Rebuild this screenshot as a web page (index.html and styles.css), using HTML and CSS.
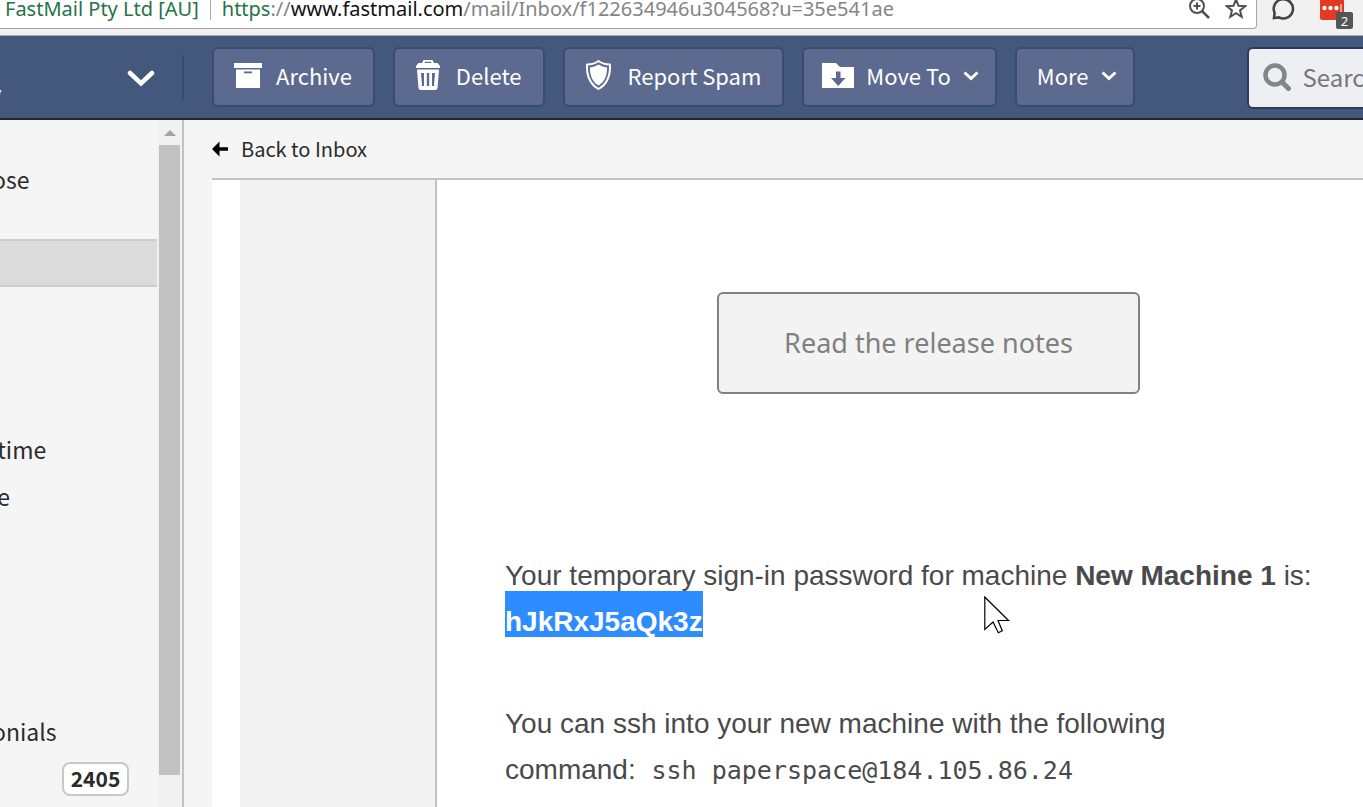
FILE: index.html
```html
<!DOCTYPE html>
<html lang="en">
<head>
<meta charset="utf-8">
<title>FastMail</title>
<link rel="stylesheet" href="styles.css">
</head>
<body>
<div class="app">
  <div class="browser">
    <div class="address">
      <span class="issuer">FastMail Pty Ltd [AU]</span>
      <span class="url"><span class="secure">https</span>://<span class="host">www.fastmail.com</span>/mail/Inbox/f122634946u304568?u=35e541ae</span>
      <svg class="tool" width="22" height="22" viewBox="0 0 22 22" fill="none" stroke="#505050" stroke-width="2"><circle cx="9" cy="9" r="7"/><path d="M5.500 9h7M9 5.500v7"/><path d="M14 14l7 7" stroke-width="2.500"/></svg>
      <svg class="tool" width="22" height="22" viewBox="0 0 22 22" fill="none" stroke="#505050" stroke-width="2"><path d="M11 2.500l2.500 6.300 6.600.4-5.100 4.200 1.700 6.400-5.700-3.600-5.700 3.600L7 13.400 1.900 9.200l6.600-.4z"/></svg>
    </div>
    <svg class="bubble" width="24" height="24" viewBox="0 0 24 24" fill="none" stroke="#444" stroke-width="2.600"><path d="M3 21l.6-5.200A9.600 9.600 0 1 1 8 20.400z"/></svg>
    <div class="extension">
      <svg width="24" height="24" viewBox="0 0 24 24"><rect width="24" height="24" rx="2" fill="#e23a22"/><g fill="#fff"><circle cx="4.500" cy="12" r="2.200"/><circle cx="10.500" cy="12" r="2.200"/><circle cx="16.500" cy="12" r="2.200"/><path d="M20.500 8h1v8h-1z"/></g></svg>
      <span class="count">2</span>
    </div>
  </div>

  <header class="toolbar">
    <div class="account">
      <span class="account-name">y</span>
      <button class="account-menu" aria-label="Account menu"><svg width="28" height="18" viewBox="0 0 28 18" fill="none" stroke="#fff" stroke-width="4.500" stroke-linecap="round"><path d="M3 4l11 10.500L25 4"/></svg></button>
    </div>
    <div class="actions">
      <button class="btn"><svg width="28" height="26" viewBox="0 0 28 26"><path fill="#fff" d="M0 1h28v5H0zM2 7.500h24V26H2z"/><path fill="#5b6a8e" d="M10 9.500h8v1.800h-8z"/></svg>Archive</button>
      <button class="btn"><svg class="tall" width="27" height="32" viewBox="-1 0 27 32"><path fill="#fff" fill-rule="evenodd" d="M6 4l1.500-3h9L18 4h3.500L24 7v2H0V7l2.500-3zM8.500 4h7l-.7-1.200H9.200zM1 10.500h22L21.500 29q-.3 2-2 2h-15q-1.700 0-2-2zM5 14l1 13h2V14zM10.800 14v13h2.400V14zM16 14v13h2l1-13z"/></svg>Delete</button>
      <button class="btn"><svg class="tall" width="29" height="32" viewBox="-1 -1 29 32"><path fill="none" stroke="#fff" stroke-width="2" stroke-linejoin="round" d="M12.500 1Q17 4.500 24 4.500C24.500 16 21.500 24 12.500 29 3.500 24 .5 16 1 4.500Q8 4.500 12.500 1z"/><path fill="#fff" d="M12.500 4.500q4 2.400 8.600 3C21 16 18.500 22 12.500 25.500 6.500 22 4 16 3.900 7.500q4.600-.6 8.600-3z"/></svg>Report Spam</button>
      <button class="btn btn-menu"><svg class="folder" width="32" height="26" viewBox="0 0 32 26"><path fill="#fff" d="M0 1h14l4 4h14v21H0z"/><path fill="#5b6a8e" d="M14 9.500h4.500V16h5L16.200 24 9 16h5z"/></svg>Move To<svg class="caret" width="16" height="10" viewBox="0 0 16 10" fill="none" stroke="#fff" stroke-width="3"><path d="M1.500 1.500L8 7.500l6.500-6"/></svg></button>
      <button class="btn btn-menu">More<svg class="caret" width="16" height="10" viewBox="0 0 16 10" fill="none" stroke="#fff" stroke-width="3"><path d="M1.500 1.500L8 7.500l6.500-6"/></svg></button>
    </div>
    <label class="search">
      <svg width="28" height="28" viewBox="0 0 28 28" fill="none" stroke="#858585"><circle cx="12" cy="12" r="9.500" stroke-width="4.500"/><path d="M19 19l6.500 6.500" stroke-width="5" stroke-linecap="round"/></svg>
      <input type="text" placeholder="Search" aria-label="Search mail">
    </label>
  </header>

  <div class="body">
    <nav class="sidebar">
      <div class="folders">
        <a class="compose" href="#">ose</a>
        <a class="row current" href="#" aria-label="Inbox"></a>
        <div class="row"></div>
        <div class="row"></div>
        <div class="row"></div>
        <a class="row" href="#"> time</a>
        <a class="row" href="#"> e</a>
        <div class="row"></div>
        <div class="row"></div>
        <div class="row"></div>
        <div class="row"></div>
        <a class="row" href="#">onials</a>
        <a class="row" href="#"><span class="badge">2405</span></a>
      </div>
      <div class="scroll">
        <svg width="12" height="6" viewBox="0 0 12 6"><path fill="#a3a3a3" d="M0 6l6-6 6 6z"/></svg>
        <div class="thumb"></div>
      </div>
    </nav>
    <main class="content">
      <div class="crumbs">
        <a class="back" href="#"><svg width="16" height="16" viewBox="0 0 16 16"><path d="M0 8l7.500-7.500v5.800H16v3.400H7.500v5.800z"/></svg>Back to Inbox</a>
      </div>
      <div class="message">
        <div class="gutter"></div>
        <article class="mail">
          <a class="notes" href="#">Read the release notes</a>
          <p>Your temporary sign-in password for machine <b>New Machine 1</b> is:<br><b class="selected">hJkRxJ5aQk3z</b></p>
          <p>You can ssh into your new machine with the following<br>command: <code>ssh paperspace@184.105.86.24</code></p>
        </article>
      </div>
    </main>
  </div>
  <svg class="cursor" width="26" height="40" viewBox="0 0 26 40"><path fill="#fff" stroke="#000" stroke-width="1.200" d="M.8 1L24.500 24.500H14l4.300 10.200-4 2.100L9 26 .8 33.500z"/></svg>
</div>
</body>
</html>
```
FILE: styles.css
```css
* { box-sizing: border-box; }
body { margin: 0; font-family: "Noto Sans CJK SC", "Noto Sans", sans-serif; color: #2b2b2b; background: #f5f5f5; }
a { color: inherit; text-decoration: none; }
svg { flex: none; }
.app { height: 100vh; display: flex; flex-direction: column; overflow: hidden; position: relative; }

.browser { flex: none; height: 36px; display: flex; align-items: flex-start; background: #f2f1f2; border-bottom: 1px solid #aaaab0; font-family: "Noto Sans", sans-serif; font-size: 20px; line-height: 18px; }
.address { width: 1257px; height: 29px; display: flex; align-items: flex-start; background: #fff; border: solid #a6a4a6; border-width: 0 1px 1px 0; border-radius: 0 0 4px 0; padding: 0 9px 0 5px; gap: 15px; white-space: nowrap; }
.issuer { height: 20px; color: #257447; border-right: 1px solid #aaa; padding-right: 11px; }
.url { flex: 1; color: #858585; margin-left: -4px; }
.secure { color: #257447; }
.host { color: #111; }
.tool { margin-top: -3px; }
.bubble { margin: -3px 0 0 14px; }
.extension { position: relative; margin: -4px 0 0 25px; line-height: 0; }
.count { position: absolute; left: 16px; top: 16px; width: 17px; height: 17px; background: #555; border-radius: 2px; color: #fff; font-size: 13px; line-height: 18px; text-align: center; }

.toolbar { flex: none; height: 84px; display: flex; align-items: flex-start; background: #44587e; border-bottom: 2px solid #23262e; }
.account { width: 184px; height: 45px; margin: 19px 28px 0 0; border-right: 2px solid #3b4b70; display: flex; align-items: center; color: #fff; }
.account-name { margin-left: -9px; font-size: 20px; align-self: flex-end; line-height: 14px; }
.account-menu { margin-left: auto; margin-right: 27px; border: 0; background: none; padding: 0; line-height: 0; }
.actions { display: flex; gap: 18px; padding-top: 11px; }
.btn { height: 60px; display: flex; align-items: center; gap: 14px; padding: 0 21px 4px 20px; border: 2px solid #3c4b6c; border-radius: 6px; background: #5b6a8e; color: #fff; font: 22px/32px "Noto Sans CJK SC", sans-serif; white-space: nowrap; }
.btn-menu { gap: 12px; padding: 0 16px 4px 20px; }
.folder { margin-left: -2px; }
.caret { margin-top: 2px; }
.search { flex: 1; min-width: 0; height: 62px; margin: 11px 0 0 112px; display: flex; align-items: center; gap: 12px; padding: 0 0 2px 14px; background: #eeeff2; border: 2px solid #2d3b59; border-right: 0; border-radius: 6px 0 0 6px; }
.search input { flex: 1; min-width: 0; border: 0; padding: 0; background: none; font: 24px/36px "Noto Sans CJK SC", sans-serif; }
.search input::placeholder { color: #777; opacity: 1; }

.body { flex: 1; min-height: 0; display: flex; }
.sidebar { width: 184px; flex: none; display: flex; border-right: 2px solid #c1c1c1; overflow: hidden; }
.folders { flex: 1; font-size: 23px; white-space: pre; display: flex; flex-direction: column; }
.compose { flex: none; height: 119px; line-height: 118px; text-indent: -8px; }
.row { flex: none; height: 47px; line-height: 44px; text-indent: -8px; }
.current { height: 48px; margin-bottom: -1px; background: #dbdbdb; border: solid #cdcdcd; border-width: 2px 0; }
.badge { display: block; width: 67px; height: 34px; margin: 6px 0 0 62px; border: 2px solid #c8c8c8; border-radius: 8px; background: #fff; font-weight: 700; font-size: 21px; line-height: 28px; text-indent: 0; text-align: center; }
.scroll { width: 25px; background: #f1f1f1; padding: 10px 2px 32px; display: flex; flex-direction: column; align-items: center; gap: 9px; }
.thumb { flex: 1; width: 21px; background: #c1c1c1; }

.content { flex: 1; min-width: 0; padding-left: 28px; display: flex; flex-direction: column; }
.crumbs { flex: none; height: 60px; border-bottom: 2px solid #c2c2c2; }
.back { display: flex; align-items: center; gap: 13px; font-size: 20px; line-height: 58px; }
.message { flex: 1; min-height: 0; display: flex; background: #fff; padding-left: 28px; }
.gutter { width: 197px; flex: none; background: #f3f3f3; border-right: 2px solid #c1c1c1; }
.mail { flex: 1; min-width: 0; padding: 112px 11px 0 68px; font: 28px/46px "Liberation Sans", sans-serif; color: #4a4a4a; }
.notes { display: block; width: 50%; margin: 0 auto 159px; border: 2px solid #808080; border-radius: 6px; background: #f3f3f3; color: #808080; font: 27px/98px "Noto Sans", sans-serif; text-align: center; white-space: nowrap; }
.mail p { margin: 0 0 56px; white-space: nowrap; }
.selected { background: #2d8cff; color: #fff; padding-top: 15px; }
.mail code { font: 25px/46px "DejaVu Sans Mono", monospace; margin-left: 8px; }
.cursor { position: absolute; left: 984px; top: 596px; }
```
